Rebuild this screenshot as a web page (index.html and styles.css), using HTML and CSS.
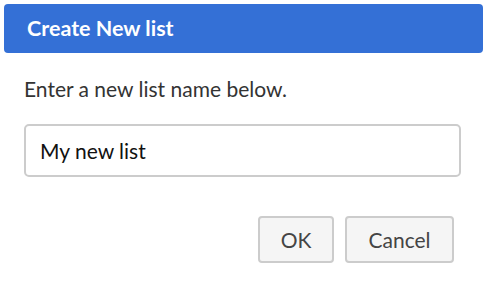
FILE: index.html
```html
<!DOCTYPE html>
<html>
<head>
<meta charset="utf-8">
<link rel="stylesheet" href="styles.css">
</head>
<body>
<div class="dialog">
  <div class="header">Create New list</div>
  <div class="content">
    <p class="prompt">Enter a new list name below.</p>
    <input class="field" type="text" value="My new list">
    <div class="actions">
      <button class="btn">OK</button>
      <button class="btn btn-cancel">Cancel</button>
    </div>
  </div>
</div>
</body>
</html>
```

FILE: styles.css
```css
html, body {
  margin: 0;
  padding: 0;
  background: #fff;
}
body {
  font-family: Lato, "Open Sans", sans-serif;
  width: 484px;
  height: 288px;
  overflow: hidden;
}
.dialog {
  padding: 4px 1px 0 4px;
}
.header {
  height: 49px;
  box-sizing: border-box;
  background: #3470d6;
  border-radius: 4px;
  color: #fff;
  font-weight: bold;
  font-size: 21.5px;
  line-height: 49px;
  padding-left: 23px;
}
.content {
  padding: 0 22px 0 20px;
}
.prompt {
  margin: 0;
  padding-top: 23px;
  font-size: 21px;
  line-height: 26px;
  color: #333;
}
.field {
  display: block;
  box-sizing: border-box;
  width: 437px;
  height: 53px;
  margin-top: 22px;
  border: 2px solid #ccc;
  border-radius: 5px;
  padding: 0 14px;
  font-family: Lato, sans-serif;
  font-size: 21px;
  color: #111;
  outline: none;
}
.actions {
  display: flex;
  justify-content: flex-end;
  gap: 11px;
  margin-top: 39px;
  padding-right: 7px;
}
.btn {
  box-sizing: border-box;
  width: 76px;
  height: 47px;
  background: #f5f5f5;
  border: 2px solid #ccc;
  border-radius: 4px;
  font-family: Lato, sans-serif;
  font-size: 21px;
  color: #444;
  padding: 0;
}
.btn-cancel {
  width: 109px;
}
```
